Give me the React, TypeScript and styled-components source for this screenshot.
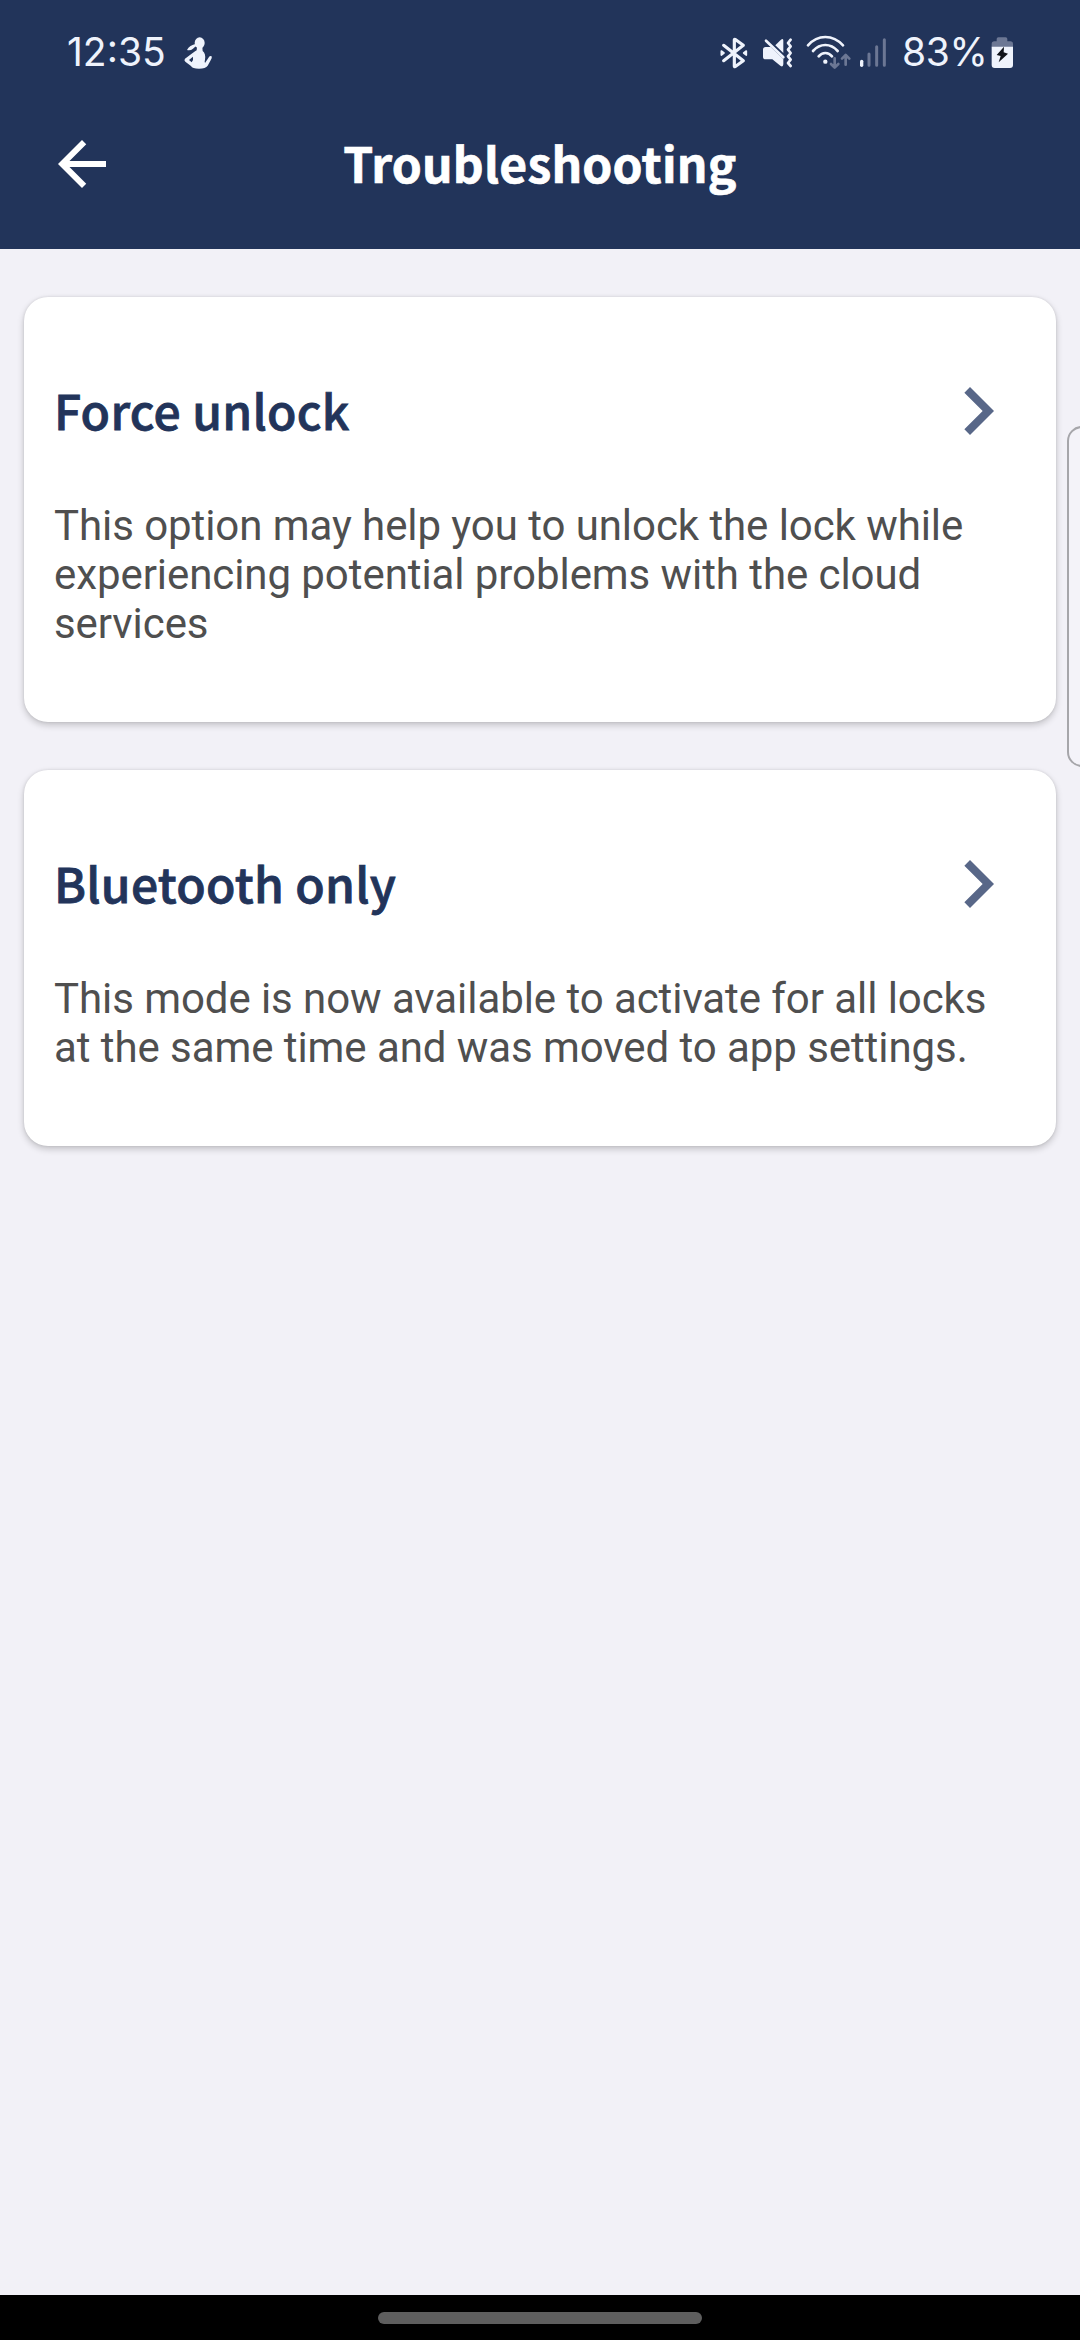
import React from "react";
import styled, { createGlobalStyle } from "styled-components";

const NAVY = "#22345a";
const DIM = "#6c7794";
const GLYPH = "#eff3fc";

const GlobalStyle = createGlobalStyle`
  html, body { margin: 0; padding: 0; background: #f2f1f7; }
  *, *::before, *::after { box-sizing: border-box; }
`;

const Screen = styled.div`
  position: relative;
  display: flex;
  flex-direction: column;
  width: 1080px;
  height: 2340px;
  overflow: hidden;
  background: #f2f1f7;
  font-family: Roboto, "Liberation Sans", sans-serif;
`;

const Header = styled.header`
  height: 249px;
  flex: none;
  background: ${NAVY};
`;

const StatusBar = styled.div`
  display: flex;
  justify-content: space-between;
  height: 106px;
  padding: 0 66px 0 67px;
  color: ${GLYPH};
`;

const StatusGroup = styled.div`
  display: flex;
  align-items: center;
`;

const StatusText = styled.span<{ $width: number; $spacing: number; $gap?: number }>`
  width: ${(p) => p.$width}px;
  margin-left: ${(p) => p.$gap ?? 0}px;
  padding-bottom: 2px;
  font-family: Inter, Roboto, sans-serif;
  font-size: 39px;
  line-height: 46px;
  letter-spacing: ${(p) => p.$spacing}px;
  white-space: nowrap;
`;

const StatusIcon = styled.svg<{ $gap?: number }>`
  display: block;
  flex: none;
  margin-left: ${(p) => p.$gap ?? 0}px;
`;

const Toolbar = styled.div`
  display: grid;
  grid-template-columns: 72px 1fr 72px;
  align-items: center;
  height: 116px;
  padding: 0 46px;
`;

const IconButton = styled.button`
  display: block;
  padding: 0;
  border: 0;
  background: none;
  height: 72px;
`;

const PageTitle = styled.h1`
  margin: 0;
  padding-bottom: 4px;
  text-align: center;
  color: #ffffff;
  font-family: "Noto Sans CJK SC", "Noto Sans", sans-serif;
  font-weight: 700;
  font-size: 48px;
  line-height: 72px;
  letter-spacing: 0.22px;
  -webkit-text-stroke: 0.7px #ffffff;
`;

const Content = styled.main`
  display: flex;
  flex: 1;
  flex-direction: column;
  gap: 48px;
  padding: 48px 24px;
`;

const Card = styled.section<{ $height: number }>`
  height: ${(p) => p.$height}px;
  flex: none;
  padding: 66px 30px 0 30px;
  border-radius: 24px;
  background: #ffffff;
  box-shadow: 0 3px 7px rgba(0, 0, 0, 0.2), 0 0 3px rgba(0, 0, 0, 0.1);
`;

const CardHead = styled.div`
  display: flex;
  align-items: center;
  justify-content: space-between;
  height: 96px;
`;

const CardTitle = styled.h2`
  margin: 0;
  padding-bottom: 4px;
  color: ${NAVY};
  font-family: "Noto Sans CJK SC", "Noto Sans", sans-serif;
  font-weight: 500;
  font-size: 48px;
  line-height: 72px;
  letter-spacing: 0.27px;
  -webkit-text-stroke: 0.8px ${NAVY};
`;

const CardText = styled.p`
  margin: 42px 0 0;
  color: #4f4f4f;
  font-size: 42px;
  line-height: 49px;
  letter-spacing: -0.07px;
  white-space: pre-line;
`;

const EdgeHandle = styled.div`
  position: absolute;
  top: 426px;
  right: -20px;
  width: 33px;
  height: 341px;
  border: 2px solid #a6a6aa;
  border-radius: 15px;
  background: #f4f3f9;
`;

const NavBar = styled.footer`
  display: flex;
  justify-content: center;
  flex: none;
  height: 45px;
  padding-top: 17px;
  background: #000000;
`;

const HomePill = styled.div`
  width: 324px;
  height: 12px;
  border-radius: 6px;
  background: #5e5e5e;
`;

const PersonIcon = () => (
  <StatusIcon width="30" height="34" viewBox="428 49 90 102" fill={GLYPH}>
    <ellipse cx="478" cy="70" rx="15" ry="17" />
    <path d="M468 72 Q447 76 440 91 Q450 94 458 87 Q464 80 472 78Z" />
    <path d="M470 82 L486 82 L487 94 Q497 102 494 120 Q492 126 494 130 L506 112 Q509 107 514 110 Q516 114 511 122 L502 138 Q496 147 476 147 Q456 147 452 139 L435 126 Q430 121 434 117 L456 101 Q466 94 469 92Z" />
    <path d="M458 111 L446 121 L454 128 Q460 120 458 111Z" fill={NAVY} />
  </StatusIcon>
);

const BluetoothIcon = () => (
  <StatusIcon width="30" height="34" viewBox="58 48 90 102" fill="none" stroke={GLYPH}>
    <path d="M72 76 L131 122 L106 140 Q104 141 104 138 V60 Q104 57 106 58 L131 76 L72 122" strokeWidth="9.5" strokeLinejoin="round" strokeLinecap="round" />
    <path d="M65 93 L73 99 L65 105Z M140 93 L132 99 L140 105Z" fill={GLYPH} strokeWidth="5" strokeLinejoin="round" />
  </StatusIcon>
);

const MuteIcon = () => (
  <StatusIcon $gap={13} width="32" height="34" viewBox="186 48 96 102" fill={GLYPH}>
    <path d="M226 76 L242 60 Q250 53 250 62 V99Z" />
    <path d="M197 81 H212 L250 117 V133 Q249 143 241 137 L217 118 H197 Q189 118 189 110 V89 Q189 81 197 81Z" />
    <path d="M198 62 L250 112" stroke={GLYPH} strokeWidth="8" strokeLinecap="round" />
    <path d="M272 59 L264 69 L272 79 L264 89 L272 99 L264 109 L272 119 L264 129 L272 138" fill="none" stroke={GLYPH} strokeWidth="8" strokeLinecap="round" strokeLinejoin="round" />
  </StatusIcon>
);

const WifiIcon = () => (
  <StatusIcon $gap={12} width="46" height="36" viewBox="318 45 138 108" fill="none" strokeLinecap="round" strokeLinejoin="round">
    <g stroke={GLYPH} strokeWidth="8">
      <path d="M324 76 Q346 51 376 51 Q406 51 429 76" />
      <path d="M339 93 Q355 75 376 75 Q397 75 413 93" />
      <path d="M356 109 Q364 99 376 99 Q388 99 396 109" />
    </g>
    <circle cx="376" cy="125" r="6.5" fill={GLYPH} />
    <g stroke={DIM} strokeWidth="8">
      <path d="M404 115 V142 M393 132 L404 143 L415 132" />
      <path d="M437 134 V106 M426 116 L437 105 L448 116" />
    </g>
  </StatusIcon>
);

const SignalIcon = () => (
  <StatusIcon $gap={7} width="28" height="34" viewBox="29 48 84 102" strokeWidth="9" strokeLinecap="round">
    <path d="M37 124 V136" stroke={GLYPH} strokeWidth="10" />
    <path d="M59 102 V136 M82 80 V136 M105 59 V136" stroke={DIM} />
  </StatusIcon>
);

const BatteryIcon = () => (
  <StatusIcon width="23" height="34" viewBox="424 48 69 102">
    <path d="M441 64 V57 Q441 52 446 52 H468 Q473 52 473 57 V64 H482 Q490 64 490 72 V82 H426 V72 Q426 64 434 64Z" fill={DIM} />
    <path d="M426 80 H490 V135 Q490 144 481 144 H435 Q426 144 426 135Z" fill={GLYPH} />
    <path d="M463 80 L441 105 L453 108 L447 127 L475 101 L462 97Z" fill="#10131a" />
  </StatusIcon>
);

const ArrowBack = () => (
  <svg width="72" height="72" viewBox="0 0 24 24" fill="#ffffff">
    <path d="M20 11H7.83l5.59-5.59L12 4l-8 8 8 8 1.41-1.41L7.83 13H20v-2z" />
  </svg>
);

const ChevronRight = () => (
  <svg width="96" height="96" viewBox="0 0 24 24" fill="#586788">
    <path d="M10 6L8.59 7.41 13.17 12l-4.58 4.59L10 18l6-6z" />
  </svg>
);

const options = [
  {
    title: "Force unlock",
    height: 425,
    text: "This option may help you to unlock the lock while\nexperiencing potential problems with the cloud\nservices",
  },
  {
    title: "Bluetooth only",
    height: 376,
    text: "This mode is now available to activate for all locks\nat the same time and was moved to app settings.",
  },
];

export default function App() {
  return (
    <Screen>
      <GlobalStyle />
      <Header>
        <StatusBar>
          <StatusGroup>
            <StatusText $width={116} $spacing={0}>12:35</StatusText>
            <PersonIcon />
          </StatusGroup>
          <StatusGroup>
            <BluetoothIcon />
            <MuteIcon />
            <WifiIcon />
            <SignalIcon />
            <StatusText $width={89} $gap={15} $spacing={-0.4}>83%</StatusText>
            <BatteryIcon />
          </StatusGroup>
        </StatusBar>
        <Toolbar>
          <IconButton aria-label="Back">
            <ArrowBack />
          </IconButton>
          <PageTitle>Troubleshooting</PageTitle>
        </Toolbar>
      </Header>
      <Content>
        {options.map((option) => (
          <Card key={option.title} $height={option.height}>
            <CardHead>
              <CardTitle>{option.title}</CardTitle>
              <ChevronRight />
            </CardHead>
            <CardText>{option.text}</CardText>
          </Card>
        ))}
      </Content>
      <EdgeHandle />
      <NavBar>
        <HomePill />
      </NavBar>
    </Screen>
  );
}
